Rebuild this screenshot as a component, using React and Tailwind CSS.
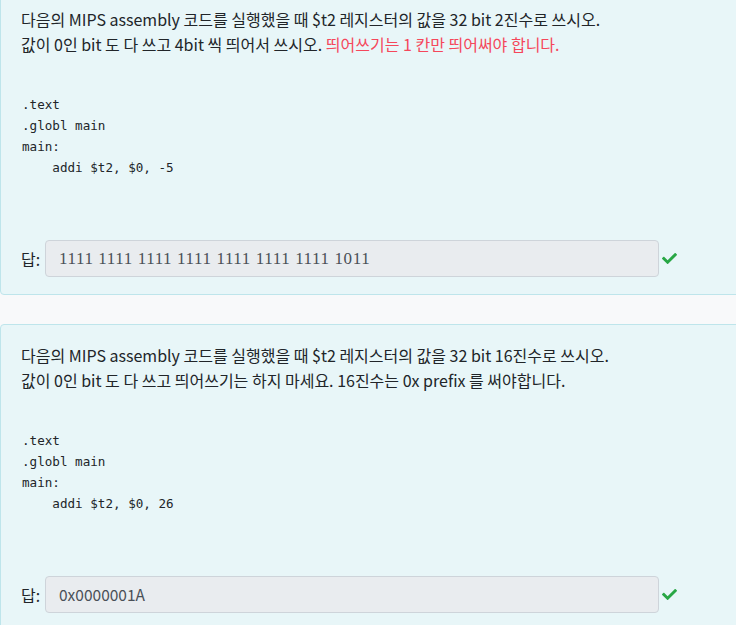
import React from 'react';
import { FaCheck } from 'react-icons/fa';

const questions = [
  {
    line1: '다음의 MIPS assembly 코드를 실행했을 때 $t2 레지스터의 값을 32 bit 2진수로 쓰시오.',
    line2: '값이 0인 bit 도 다 쓰고 4bit 씩 띄어서 쓰시오. ',
    warn: '띄어쓰기는 1 칸만 띄어써야 합니다.',
    code: '.text\n.globl main\nmain:\n    addi $t2, $0, -5',
    answer: '1111 1111 1111 1111 1111 1111 1111 1011',
    serif: true,
  },
  {
    line1: '다음의 MIPS assembly 코드를 실행했을 때 $t2 레지스터의 값을 32 bit 16진수로 쓰시오.',
    line2: '값이 0인 bit 도 다 쓰고 띄어쓰기는 하지 마세요. 16진수는 0x prefix 를 써야합니다.',
    warn: null,
    code: '.text\n.globl main\nmain:\n    addi $t2, $0, 26',
    answer: '0x0000001A',
    serif: false,
  },
];

const QuestionCard = ({ q }) => {
  return (
    <div className="w-[745px] bg-[#e8f6f8] border border-[#bee5eb] rounded-[4px] pl-5 pt-[18px] pb-[17px]">
      <p className="text-[16px] leading-[24.5px] text-[#212529]">
        {q.line1}
        <br />
        {q.line2}
        {q.warn && <span className="text-[#f5475b]">{q.warn}</span>}
      </p>

      <pre className="mt-[38px] pl-px text-[12.6px] leading-[21px] text-[#212529] font-['DejaVu_Sans_Mono',monospace]">
        {q.code}
      </pre>

      <div className="mt-[62px] flex items-center">
        <span className="text-[16px] text-[#212529] w-[24px]">답:</span>
        <div
          className={
            q.serif
              ? "w-[614px] h-[37px] flex items-center pl-[13px] bg-[#e9ecef] border border-[#ced4da] rounded-[4px] text-[17px] tracking-[0.6px] text-[#495057] font-['Liberation_Serif',serif]"
              : "w-[614px] h-[37px] flex items-center pl-[13px] bg-[#e9ecef] border border-[#ced4da] rounded-[4px] text-[15.5px] text-[#495057]"
          }
        >
          {q.answer}
        </div>
        <FaCheck className="ml-[3px] w-[15px] h-[15px] text-[#28a745]" />
      </div>
    </div>
  );
};

export default function App() {
  return (
    <div className="h-[625px] overflow-hidden bg-[#f8f9fa] font-['Noto_Sans_CJK_KR','Noto_Sans',sans-serif]">
      <div className="-mt-[12px] flex flex-col gap-[29px]">
        {questions.map((q, i) => (
          <QuestionCard key={i} q={q} />
        ))}
      </div>
    </div>
  );
}
